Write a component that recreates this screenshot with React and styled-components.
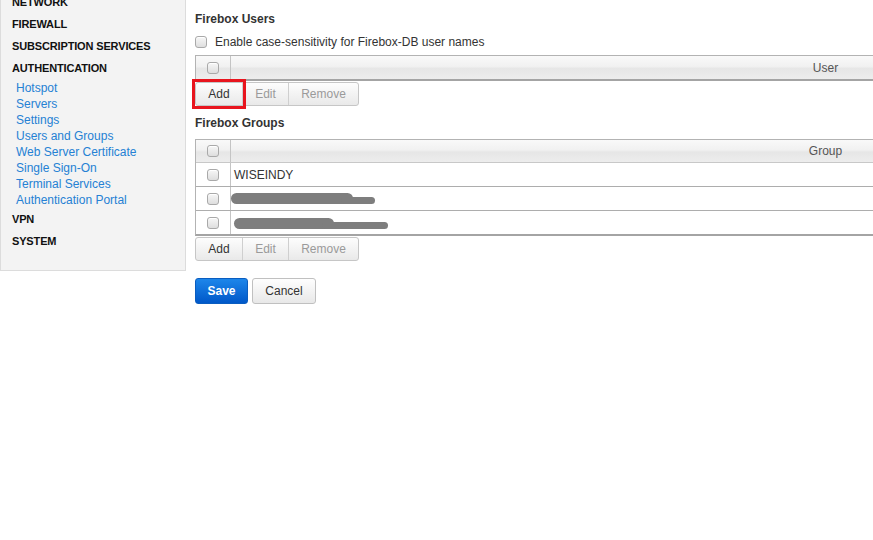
import styled, { createGlobalStyle, css } from "styled-components";

const GlobalStyle = createGlobalStyle`
  html, body {
    margin: 0;
    padding: 0;
    background: #fff;
    overflow: hidden;
  }
  body {
    font-family: "Liberation Sans", Arial, sans-serif;
    font-size: 12px;
    color: #333;
  }
`;

const Page = styled.div`
  display: flex;
  align-items: flex-start;
  margin-top: -10px;
`;

const Sidebar = styled.nav`
  flex: 0 0 184px;
  background: #f3f3f3;
  border: 1px solid #dcdcdc;
  border-top: none;
  padding: 1px 0 18px;
`;

const NavHeading = styled.div`
  font-size: 11px;
  font-weight: 700;
  color: #111;
  line-height: 22px;
  padding-left: 11px;
  letter-spacing: -0.15px;
  text-transform: uppercase;
`;

const NavLinks = styled.div`
  padding-top: 1px;
`;

const NavLink = styled.a`
  display: block;
  font-size: 12px;
  line-height: 16px;
  padding-left: 15px;
  color: #2581d4;
  text-decoration: none;
`;

const Main = styled.main`
  flex: 1;
  min-width: 0;
  padding: 21px 0 0 9px;
`;

const SectionTitle = styled.h3`
  margin: ${({ $top }) => $top || 0}px 0 0;
  font-size: 12px;
  font-weight: 700;
  line-height: 16px;
  color: #333;
`;

const CheckRow = styled.label`
  display: flex;
  align-items: center;
  gap: 8px;
  margin-top: 7px;
  line-height: 16px;
  color: #333;
`;

const Box = styled.span`
  display: inline-block;
  width: 10px;
  height: 10px;
  border: 1px solid #a9a9a9;
  border-radius: 3px;
  background: linear-gradient(#f7f7f7, #dedede);
  box-shadow: inset 0 1px 0 #fff;
`;

const Table = styled.div`
  width: 1224px;
  margin-top: ${({ $top }) => $top}px;
  border: 1px solid #b3b3b3;
  border-bottom: 2px solid #a4a4a4;
  border-right: none;
`;

const Row = styled.div`
  display: grid;
  grid-template-columns: 35px 1fr;
  height: ${({ $h }) => $h || 23}px;
  border-top: ${({ $divider }) => $divider || "none"};
  ${({ $head }) =>
    $head
      ? css`
          background: linear-gradient(
            #f9f9f9 0%,
            #f1f1f1 45%,
            #e6e6e6 55%,
            #ededed 100%
          );
          color: #555;
        `
      : css`
          background: #fff;
          color: #333;
        `}
`;

const CheckCell = styled.div`
  display: flex;
  align-items: center;
  justify-content: center;
  border-right: 1px solid #c4c4c4;
`;

const Cell = styled.div`
  display: flex;
  align-items: center;
  justify-content: ${({ $center }) => ($center ? "center" : "flex-start")};
  padding-left: ${({ $center }) => ($center ? 0 : 3)}px;
`;

const Redacted = styled.span`
  position: relative;
  display: inline-block;
  width: ${({ $w }) => $w}px;
  height: ${({ $h }) => $h}px;
  margin-left: ${({ $x }) => $x}px;
  margin-top: ${({ $y }) => $y}px;
  background: #7e7e7e;
  border-radius: 6px;
  &::after {
    content: "";
    position: absolute;
    left: ${({ $w }) => $w - 12}px;
    top: ${({ $h }) => Math.round($h / 2) - 2}px;
    width: ${({ $tail }) => $tail}px;
    height: 7px;
    border-radius: 4px;
    background: #7e7e7e;
  }
`;

const ButtonGroup = styled.div`
  display: inline-flex;
  margin-top: 1px;
  border: 1px solid #c6c6c6;
  border-radius: 3px;
  background: linear-gradient(#fdfdfd, #e9e9e9);
`;

const GroupButton = styled.button`
  font-family: inherit;
  font-size: 12px;
  height: 22px;
  padding: 0;
  width: ${({ $w }) => $w}px;
  border: none;
  border-left: ${({ $first }) => ($first ? "none" : "1px solid #cfcfcf")};
  background: transparent;
  color: ${({ disabled }) => (disabled ? "#9a9a9a" : "#333")};
  ${({ $marked }) =>
    $marked &&
    css`
      outline: 3px solid #e8151e;
      outline-offset: 1px;
    `}
`;

const Actions = styled.div`
  display: flex;
  gap: 4px;
  margin-top: 17px;
`;

const ActionButton = styled.button`
  font-family: inherit;
  font-size: 12px;
  height: 26px;
  border-radius: 3px;
  padding: 0;
  ${({ $primary }) =>
    $primary
      ? css`
          width: 53px;
          font-weight: 700;
          color: #fff;
          border: 1px solid #0a5dc0;
          background: linear-gradient(#1d86ea, #0058c9);
        `
      : css`
          width: 64px;
          color: #333;
          border: 1px solid #c0c0c0;
          background: linear-gradient(#fefefe, #e8e8e8);
        `}
`;

const menu = [
  { title: "Network" },
  { title: "Firewall" },
  { title: "Subscription Services" },
  {
    title: "Authentication",
    links: [
      "Hotspot",
      "Servers",
      "Settings",
      "Users and Groups",
      "Web Server Certificate",
      "Single Sign-On",
      "Terminal Services",
      "Authentication Portal",
    ],
  },
  { title: "VPN" },
  { title: "System" },
];

const Buttons = ({ marked }) => (
  <ButtonGroup>
    <GroupButton $first $w={46} $marked={marked}>
      Add
    </GroupButton>
    <GroupButton $w={46} disabled>
      Edit
    </GroupButton>
    <GroupButton $w={70} disabled>
      Remove
    </GroupButton>
  </ButtonGroup>
);

const ROW_LINE = "1px solid #adadad";

export default function App() {
  return (
    <>
      <GlobalStyle />
      <Page>
        <Sidebar>
          {menu.map((m) => (
            <div key={m.title}>
              <NavHeading>{m.title}</NavHeading>
              {m.links && (
                <NavLinks>
                  {m.links.map((l) => (
                    <NavLink key={l}>{l}</NavLink>
                  ))}
                </NavLinks>
              )}
            </div>
          ))}
        </Sidebar>
        <Main>
          <SectionTitle>Firebox Users</SectionTitle>
          <CheckRow>
            <Box />
            Enable case-sensitivity for Firebox-DB user names
          </CheckRow>
          <Table $top={5}>
            <Row $head $h={23}>
              <CheckCell>
                <Box />
              </CheckCell>
              <Cell $center>User</Cell>
            </Row>
          </Table>
          <Buttons marked />

          <SectionTitle $top={9}>Firebox Groups</SectionTitle>
          <Table $top={8}>
            <Row $head $h={22}>
              <CheckCell>
                <Box />
              </CheckCell>
              <Cell $center>Group</Cell>
            </Row>
            <Row $divider="1px solid #c8c8c8">
              <CheckCell>
                <Box />
              </CheckCell>
              <Cell>WISEINDY</Cell>
            </Row>
            <Row $divider={ROW_LINE}>
              <CheckCell>
                <Box />
              </CheckCell>
              <Cell>
                <Redacted $w={122} $h={11} $x={-3} $y={0} $tail={34} />
              </Cell>
            </Row>
            <Row $divider={ROW_LINE}>
              <CheckCell>
                <Box />
              </CheckCell>
              <Cell>
                <Redacted $w={100} $h={11} $x={0} $y={2} $tail={66} />
              </Cell>
            </Row>
          </Table>
          <Buttons />

          <Actions>
            <ActionButton $primary>Save</ActionButton>
            <ActionButton>Cancel</ActionButton>
          </Actions>
        </Main>
      </Page>
    </>
  );
}
